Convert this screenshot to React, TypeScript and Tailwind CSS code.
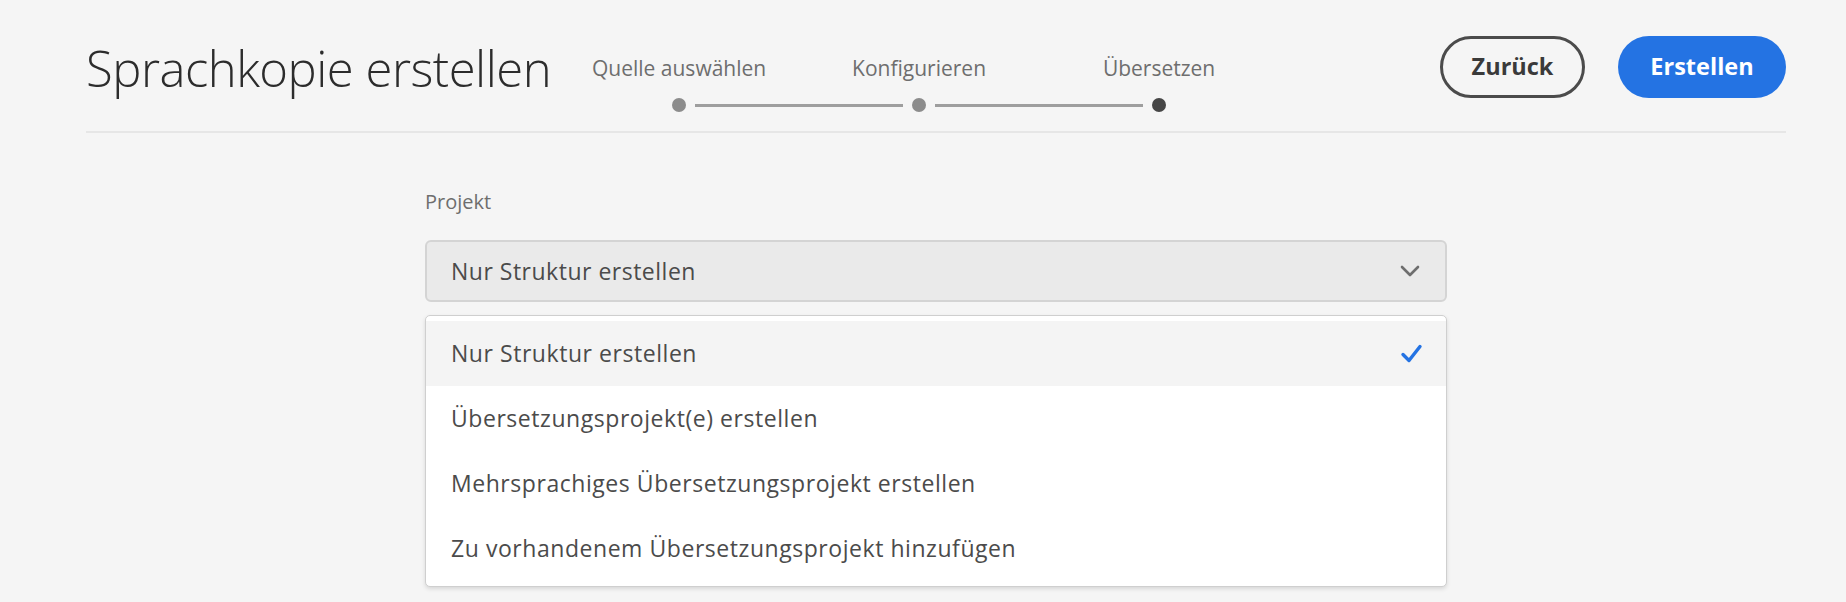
import React from "react";

const steps = [
  { label: "Quelle auswählen", done: true },
  { label: "Konfigurieren", done: true },
  { label: "Übersetzen", done: false },
];

const options = [
  "Nur Struktur erstellen",
  "Übersetzungsprojekt(e) erstellen",
  "Mehrsprachiges Übersetzungsprojekt erstellen",
  "Zu vorhandenem Übersetzungsprojekt hinzufügen",
];

export default function App() {
  return (
    <div
      className="w-full h-[602px] bg-[#f5f5f5] text-[#4b4b4b] overflow-hidden"
      style={{ fontFamily: '"Open Sans", "Noto Sans", sans-serif' }}
    >
      <div className="pl-[86px] pr-[60px]">
        {/* Header */}
        <div className="h-[131px] flex items-start pt-[36px]">
          <h1 className="text-[49px] leading-[64px] font-light text-[#2c2c2c] tracking-[-0.5px] whitespace-nowrap">
            Sprachkopie erstellen
          </h1>
          <div className="ml-[8px] flex">
            {steps.map((s, i) => (
              <div key={s.label} className="w-[240px] flex flex-col items-center">
                <div className="mt-[20px] h-[24px] leading-[24px] text-[21px] text-[#6e6e6e] whitespace-nowrap">
                  {s.label}
                </div>
                <div className="mt-[18px] w-full flex items-center">
                  <div
                    className={
                      i === 0 ? "flex-1 h-[3px]" : "flex-1 h-[3px] bg-[#9e9e9e]"
                    }
                  />
                  <div
                    className={
                      s.done
                        ? "mx-[9px] w-[14px] h-[14px] rounded-full bg-[#8c8c8c]"
                        : "mx-[9px] w-[14px] h-[14px] rounded-full bg-[#464646]"
                    }
                  />
                  <div
                    className={
                      i === steps.length - 1
                        ? "flex-1 h-[3px]"
                        : "flex-1 h-[3px] bg-[#9e9e9e]"
                    }
                  />
                </div>
              </div>
            ))}
          </div>
          <div className="flex-1" />
          <div className="flex items-center gap-[33px]">
            <button className="h-[62px] w-[145px] rounded-full border-[3px] border-[#4b4b4b] text-[23.5px] font-bold text-[#3a3a3a] flex items-center justify-center">
              Zurück
            </button>
            <button className="h-[62px] w-[168px] rounded-full bg-[#2473e3] text-[23.5px] font-bold text-white flex items-center justify-center">
              Erstellen
            </button>
          </div>
        </div>
        <div className="h-[2px] bg-[#e6e6e6]" />

        {/* Form */}
        <div className="w-[1022px] mx-auto pt-[57px]">
          <div className="h-[24px] leading-[24px] text-[20px] text-[#6e6e6e]">Projekt</div>
          <div className="mt-[26px] h-[62px] rounded-[6px] border-2 border-[#d4d4d4] bg-[#eaeaea] flex items-center pl-[24px] pr-[25px]">
            <span className="text-[23px] tracking-[0.5px] text-[#4b4b4b]">Nur Struktur erstellen</span>
            <div className="flex-1" />
            <svg width="20" height="12" viewBox="0 0 20 12" fill="none">
              <path
                d="M2 2 L10 10 L18 2"
                stroke="#6e6e6e"
                strokeWidth="2.6"
                strokeLinecap="round"
                strokeLinejoin="round"
              />
            </svg>
          </div>
          <div className="mt-[13px] rounded-[5px] border border-[#cfcfcf] bg-white py-[5px] shadow-[0_2px_4px_rgba(0,0,0,0.12)]">
            {options.map((o, i) => (
              <div
                key={o}
                className={
                  i === 0
                    ? "h-[65px] flex items-center pl-[25px] pr-[23px] bg-[#f4f4f4]"
                    : "h-[65px] flex items-center pl-[25px] pr-[23px]"
                }
              >
                <span className="text-[23px] tracking-[0.55px] text-[#4b4b4b]">{o}</span>
                <div className="flex-1" />
                {i === 0 && (
                  <svg width="23" height="21" viewBox="0 0 23 21" fill="none">
                    <path
                      d="M3 11.5 L9 17.5 L20 3.5"
                      stroke="#2473e3"
                      strokeWidth="3.4"
                      strokeLinecap="round"
                      strokeLinejoin="round"
                    />
                  </svg>
                )}
              </div>
            ))}
          </div>
        </div>
      </div>
    </div>
  );
}
